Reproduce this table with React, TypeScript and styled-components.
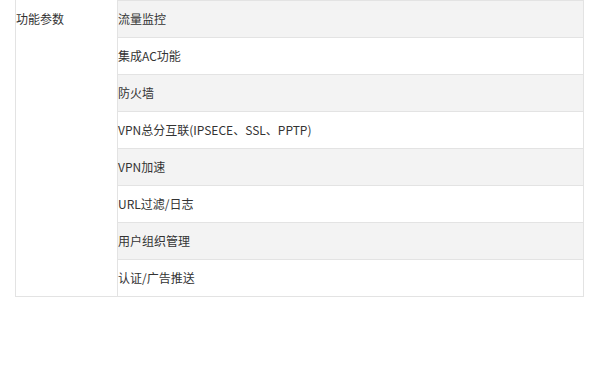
import * as React from "react";
import styled, { createGlobalStyle } from "styled-components";

const GlobalStyle = createGlobalStyle`
  body {
    margin: 0;
    background: #fff;
    font-family: "Noto Sans CJK SC", "Microsoft YaHei", sans-serif;
    font-size: 12px;
    color: #333;
  }
`

const ParamTable = styled.div`
  display: flex;
  box-sizing: border-box;
  width: 569px;
  margin-left: 15px;
  border: 1px solid #e3e3e3;
  border-top: none;
`

const Label = styled.div`
  box-sizing: border-box;
  width: 102px;
  flex-shrink: 0;
  border-right: 1px solid #e3e3e3;
  padding-top: 1px;
  line-height: 36px;
`

const Values = styled.div`
  flex: 1;
  display: flex;
  flex-direction: column;
`

const Row = styled.div<{ $shaded: boolean }>`
  box-sizing: border-box;
  height: 37px;
  border-top: 1px solid #e3e3e3;
  background: ${(p) => (p.$shaded ? "#f3f3f3" : "#fff")};
  line-height: 36px;
  white-space: nowrap;
`

const features = [
  "流量监控",
  "集成AC功能",
  "防火墙",
  "VPN总分互联(IPSECE、SSL、PPTP)",
  "VPN加速",
  "URL过滤/日志",
  "用户组织管理",
  "认证/广告推送",
]

const App: React.FC = () => {
  return (
    <>
      <GlobalStyle />
      <ParamTable>
        <Label>功能参数</Label>
        <Values>
          {features.map((f, i) => (
            <Row key={f} $shaded={i % 2 === 0}>{f}</Row>
          ))}
        </Values>
      </ParamTable>
    </>
  )
}

export default App
